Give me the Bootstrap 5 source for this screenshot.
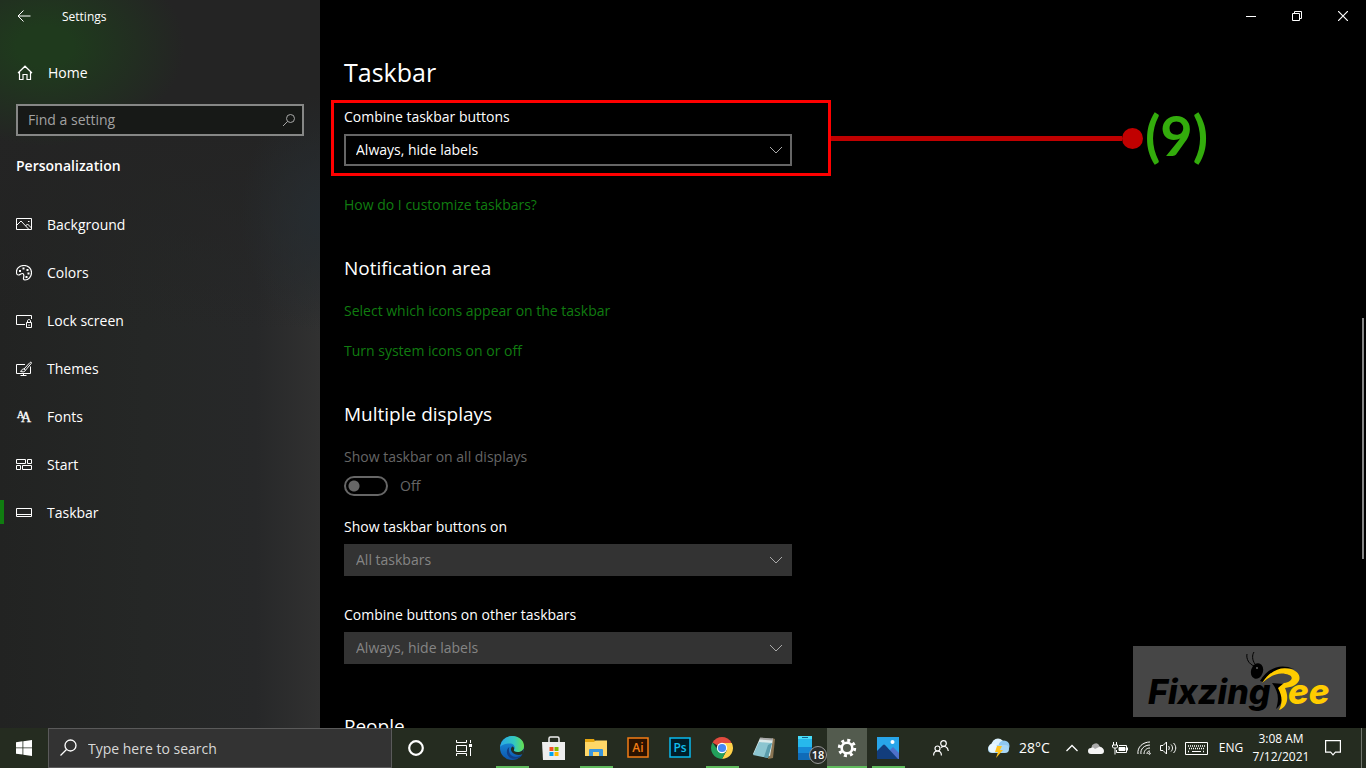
<!DOCTYPE html>
<html lang="en" data-bs-theme="dark">
<head>
<meta charset="utf-8">
<meta name="viewport" content="width=device-width, initial-scale=1">
<title>Settings - Taskbar</title>
<link href="https://cdn.jsdelivr.net/npm/bootstrap@5.3.0/dist/css/bootstrap.min.css" rel="stylesheet">
<style>
body { font-family: "Open Sans", "Noto Sans", sans-serif; font-size: 14px; line-height: 20px; color: #fff; background: #000; }
svg { display: block; flex: none; }
.ln { fill: none; stroke: currentColor; }
.btn { --bs-btn-padding-x: 0; --bs-btn-padding-y: 0; --bs-btn-border-radius: 0; --bs-btn-border-width: 0; --bs-btn-color: #fff; line-height: 20px; display: flex; align-items: center; justify-content: center; }

.side { width: 320px; background:
  radial-gradient(ellipse 140px 100px at 45px 46px, #1f3a1d 20%, transparent),
  radial-gradient(ellipse 80px 120px at 320px 215px, #262c30, transparent),
  linear-gradient(180deg, #242424 130px, transparent 330px),
  linear-gradient(90deg, #222322 0%, #252726 45%, #272829 80%, #313131 100%); }
.caption-bar { height: 32px; font-size: 12px; }
.caption-bar .btn { width: 46px; }
.side .btn-back { width: 48px; }
.app-name { margin: 2px 0 0 14px; }
.home-link { height: 48px; margin: 17px 0 7px; padding-left: 17px; gap: 15px; color: #fff; text-decoration: none; }
.find-box { margin: 0 16px; }
.find-box .form-control { height: 32px; border: 2px solid #868786; border-radius: 0; background: #171917; padding: 0 36px 2px 10px; font-size: 14px; color: #fff; }
.find-box .form-control::placeholder { color: #a2a2a2; opacity: 1; }
.find-box svg { position: absolute; right: 8px; top: 9px; color: #a8a8a8; }
.side h2 { font-size: 14px; line-height: 20px; font-weight: 600; margin: 20px 16px 25px; }
.side .nav-link { height: 48px; padding: 0 16px; gap: 15px; color: #fff; display: flex; align-items: center; position: relative; }
.side .nav-link.active::before { content: ""; position: absolute; left: 0; top: 11px; width: 4px; height: 24px; background: #107c10; }

.pane { min-width: 0; }
.page-body { padding: 20px 24px 0; }
h1 { font-size: 25px; line-height: 40px; font-weight: 400; margin: 0 0 8px; }
.page-body h2 { font-size: 19px; line-height: 28px; font-weight: 400; margin: 39px 0 19px; }
.page-body a { display: table; color: #107c10; text-decoration: none; margin-bottom: 20px; }
.callout { margin: 0 0 19px -13px; }
.callout-frame { width: 500px; border: 3px solid #f00; padding: 4px 10px 7px; }
.callout-line { flex: 0 1 291px; height: 5px; background: #c00000; }
.callout-dot { width: 21px; height: 21px; background: #c00000; }
.callout-num { font: 700 56px/60px Lato, sans-serif; color: #33ac0c; margin-left: 2px; padding-bottom: 6px; }
.pick label { display: block; margin-bottom: 7px; }
.pick + .pick { margin-top: 29px; }
.pick .form-select { width: 448px; max-width: 100%; height: 32px; padding: 0 36px 0 10px; border: 2px solid #666; border-radius: 0; font-size: 14px; line-height: 20px; color: #fff;
  background: #000 url("data:image/svg+xml,%3Csvg xmlns='http://www.w3.org/2000/svg' width='14' height='8'%3E%3Cpath d='M1 1l6 6 6-6' fill='none' stroke='%23aaa'/%3E%3C/svg%3E") no-repeat right 7px center / 14px 8px; }
.pick .form-select:disabled { background-color: #333; border-color: #333; color: #858585; }
.muted-text { color: #666; }
.switch-row { height: 20px; margin: 9px 0 21px; gap: 12px; }
.toggle.form-check-input { width: 44px; height: 20px; margin: 0; border: 2px solid #666; border-radius: 10px; opacity: 1;
  background: radial-gradient(circle at 8px 8px, #666 5px, transparent 6px) no-repeat; }
.scroll-thumb { position: absolute; right: 2px; top: 43.7%; width: 2px; height: 33.1%; background: #858585; }
.brand { position: absolute; right: 20px; bottom: 11px; background: #464646; }

.tasks { height: 40px; background: #252c20; }
.tasks .btn { height: 40px; width: 42px; position: relative; }
.tasks .btn-wide { width: 48px; }
.pinned { margin-left: 3px; }
.tasks .running::after { content: ""; position: absolute; left: 5px; right: 4px; bottom: 0; height: 2px; background: #60bb5d; }
.tasks .current { background: #535b4e; width: 40px; }
.tasks .current::after { left: 0; right: 0; }
.find-all { width: 344px; }
.find-all .form-control { height: 40px; border: 1px solid #5a5a5a; border-radius: 0; background: #333; padding: 0 10px 0 39px; font-size: 14px; }
.find-all .form-control::placeholder { color: #d8d8d8; opacity: 1; }
.find-all svg { position: absolute; left: 12px; top: 11px; }
.count-pill { position: absolute; right: 0; bottom: 4px; width: 18px; height: 18px; border: 1px solid #999; background: #2b2d2b; font-size: 11px; line-height: 16px; font-weight: 600; }
.tray .btn { font-size: 12px; width: 24px; }
.tray .btn-weather { width: 99px; font-size: 14px; gap: 8px; margin-left: 8px; }
.tray .btn-lang { width: 38px; }
.tray .btn-clock { width: 62px; line-height: 18px; }
.tray .btn-notes { width: 42px; }
.peek { width: 5px; height: 40px; margin-left: 7px; border-left: 1px solid #71766d; }
</style>
</head>
<body class="vh-100 d-flex flex-column overflow-hidden">

<main class="d-flex flex-grow-1 position-relative overflow-hidden">
  <aside class="side flex-shrink-0">
    <div class="caption-bar d-flex align-items-center">
      <button class="btn btn-back" aria-label="Back"><svg width="14" height="12" viewBox="0 0 14 12" class="ln"><path d="M6.500.5L1 6l5.500 5.500M1 6h12.500"/></svg></button>
      <span class="app-name">Settings</span>
    </div>
    <a href="#" class="home-link d-flex align-items-center"><svg width="16" height="16" viewBox="0 0 16 16" class="ln" stroke-width="1.200"><path d="M1 8L8 1.200 15 8M2.500 7v7.500H6v-5h4v5h3.500V7"/></svg>Home</a>
    <div class="find-box position-relative">
      <input class="form-control" type="search" placeholder="Find a setting" aria-label="Find a setting">
      <svg width="14" height="14" viewBox="0 0 14 14" class="ln"><circle cx="8.500" cy="5.500" r="4"/><path d="M5.600 8.400L1 13"/></svg>
    </div>
    <h2>Personalization</h2>
    <nav class="nav flex-column">
      <a class="nav-link" href="#"><svg width="16" height="16" viewBox="0 0 16 16" class="ln"><path d="M.5 1.500h15v11H.5zM1 8l4-4 7.500 8M9.500 9l2-2 4 4"/><path d="M12 4.500h1.500"/></svg>Background</a>
      <a class="nav-link" href="#"><svg width="16" height="16" viewBox="0 0 16 16" class="ln"><path stroke-width="1.200" d="M.6 8.500C-.3 3.500 3.500.5 8 .5c4.300 0 7.500 3 7.500 7 0 4.400-3 7.500-6.500 7.500-1.600 0-1.700-1-1.400-2.300.4-1.600.5-4-1.100-4.200C5 8.300 4 10 2.400 10 1.300 10 .8 9.500.6 8.500z"/><path stroke-width="2" d="M3 6h2M6.500 3.500h2M10.500 5h2M11.500 8.500h2M9.500 12h2"/></svg>Colors</a>
      <a class="nav-link" href="#"><svg width="16" height="16" viewBox="0 0 16 16" class="ln"><path d="M9 11.500H.5v-9h15V6M10.500 9.500h5v5h-5zM11.500 9.500V8c0-2 3-2 3 0v1.500M13 11.500v1.500"/></svg>Lock screen</a>
      <a class="nav-link" href="#"><svg width="16" height="16" viewBox="0 0 16 16" class="ln"><path d="M9 3.500H.5v9h14v-7M7.500 12.500v2M4.500 14.500h6M8 8l6-6.500c1-.8 2 0 1.200 1L9.500 9.200zM8 8c-1.500-.2-2 .5-2.300 1.500-.2.600-.7.800-1.200.8 1.800 1 4.600.7 5-1.100"/></svg>Themes</a>
      <a class="nav-link" href="#"><svg width="16" height="16" viewBox="0 0 16 16" fill="currentColor" stroke="currentColor" stroke-width=".3" font-family="Liberation Serif, serif"><text x="1" y="9" font-size="10">A</text><text x="5" y="13" font-size="14">A</text></svg>Fonts</a>
      <a class="nav-link" href="#"><svg width="16" height="16" viewBox="0 0 16 16" class="ln"><path d="M.5 2.500h9v4h-9zM11.500 2.500h4v4h-4zM.5 8.500h4v4h-4zM6.500 8.500h9v4h-9z"/></svg>Start</a>
      <a class="nav-link active" href="#" aria-current="page"><svg width="16" height="16" viewBox="0 0 16 16" class="ln"><path d="M.5 3.500h15v8H.5zM1 9.500h14"/></svg>Taskbar</a>
    </nav>
  </aside>

  <section class="pane flex-grow-1">
    <div class="caption-bar d-flex justify-content-end">
      <button class="btn" aria-label="Minimize"><svg width="10" height="10" class="ln"><path d="M0 5.500h10"/></svg></button>
      <button class="btn" aria-label="Restore"><svg width="10" height="10" class="ln"><path d="M.5 2.500h7v7h-7zM2.500 2.500v-2h7v7h-2"/></svg></button>
      <button class="btn" aria-label="Close"><svg width="10" height="10" class="ln" stroke-width="1.200"><path d="M0 0l10 10M10 0L0 10"/></svg></button>
    </div>
    <div class="page-body">
      <h1>Taskbar</h1>
      <div class="callout d-flex align-items-center">
        <div class="callout-frame pick">
          <label for="combine">Combine taskbar buttons</label>
          <select id="combine" class="form-select"><option>Always, hide labels</option></select>
        </div>
        <div class="callout-line"></div>
        <div class="callout-dot rounded-circle"></div>
        <div class="callout-num">(9)</div>
      </div>
      <a href="#">How do I customize taskbars?</a>

      <h2>Notification area</h2>
      <a href="#">Select which icons appear on the taskbar</a>
      <a href="#">Turn system icons on or off</a>

      <h2>Multiple displays</h2>
      <label class="d-block muted-text" for="all-displays">Show taskbar on all displays</label>
      <div class="switch-row form-switch d-flex align-items-center muted-text ps-0">
        <input id="all-displays" class="toggle form-check-input" type="checkbox" role="switch" disabled>
        <span>Off</span>
      </div>
      <div class="pick">
        <label for="buttons-on">Show taskbar buttons on</label>
        <select id="buttons-on" class="form-select" disabled><option>All taskbars</option></select>
      </div>
      <div class="pick">
        <label for="combine-other">Combine buttons on other taskbars</label>
        <select id="combine-other" class="form-select" disabled><option>Always, hide labels</option></select>
      </div>
      <h2 class="mt-5">People</h2>
    </div>
  </section>

  <div class="scroll-thumb"></div>
  <div class="brand">
    <svg width="213" height="71" viewBox="0 0 213 71" role="img" aria-label="FixzingBee" font-family="Inter, sans-serif" font-size="33" font-weight="800" font-style="italic">
      <text x="15" y="58" font-size="34">Fixzing</text>
      <text x="155" y="58" font-size="35" fill="#fc0">ee</text>
      <path d="M127 35c8-13 20-18 34-12-13-2-23 2-31 13zM139 37l12 1 1 5-4 0c4 8 1 15-5 20 3-9 3-17-4-26z"/>
      <path fill="#fc0" d="M129 37c8-12 18-17 29-14 12 4 11 15-1 18l-5 1c4 9 3 19-6 22 4-8 3-14-1-22l6-5c8-1 10-6 5-8-9-4-18 0-27 8z"/>
      <ellipse cx="124" cy="25" rx="6" ry="8" transform="rotate(18 124 25)"/>
      <path d="M121 20c-5-2-8-7-7-12M122 18c-3-4-3-9-1-12" fill="none" stroke="#000"/>
      <circle cx="124" cy="22" r="1" fill="#666"/>
    </svg>
  </div>
</main>

<footer class="tasks d-flex align-items-center flex-shrink-0">
  <button class="btn btn-wide" aria-label="Start"><svg width="16" height="16" viewBox="0 0 16 16" fill="#fff"><path d="M0 2.200L6.500 1.300v6.200H0zM7.300 1.200L16 0v7.500H7.300zM0 8.300h6.500v6.300L0 13.700zM7.300 8.300H16V16l-8.700-1.200z"/></svg></button>
  <div class="find-all position-relative">
    <input class="form-control" type="search" placeholder="Type here to search" aria-label="Type here to search">
    <svg width="17" height="17" viewBox="0 0 17 17" class="ln" stroke-width="1.300"><circle cx="10.500" cy="6.500" r="5.500"/><path d="M6.500 10.500L.5 16.500"/></svg>
  </div>
  <button class="btn btn-wide" aria-label="Cortana"><svg width="16" height="16" class="ln" stroke-width="2.200"><circle cx="8" cy="8" r="6.800"/></svg></button>
  <button class="btn btn-wide" aria-label="Task view"><svg width="17" height="16" viewBox="0 0 17 16" class="ln"><path d="M.5 0v2.500h10V0M.5 5.500h10v6H.5zM.5 16v-2.500h10V16M14.500 0v3M14.500 8v8"/><path d="M13 4h3v3h-3z" fill="currentColor" stroke="none"/></svg></button>
  <div class="pinned d-flex">
    <button class="btn running" aria-label="Edge"><svg width="24" height="24" viewBox="0 0 24 24"><defs><linearGradient id="e1" x2="1"><stop stop-color="#29a8e8"/><stop offset=".6" stop-color="#34c9bd"/><stop offset="1" stop-color="#67e04c"/></linearGradient><linearGradient id="e2" y2="1" x2="0"><stop stop-color="#1b97e0"/><stop offset="1" stop-color="#0d55ad"/></linearGradient></defs><circle cx="12" cy="12" r="12" fill="url(#e2)"/><path d="M.2 11C1 4 6 0 12 0c7 0 12 4.500 12 10 0 4-3 6-6.500 6-3 0-4.300-1-3.500-2.200 1.500-2 .8-6.300-4.500-6.300C5.500 7.500 1.500 9 .2 11z" fill="url(#e1)"/><path d="M9.300 11c-2 7 3.500 11.500 9.500 9.500 1.500-.5 3-1.300 3.800-2.300-3 6-14 6.500-15.600-1C6.500 14.500 7.300 12.500 9.300 11z" fill="#113f87"/><path d="M14 13.800c-.8 1.200.5 2.200 3.500 2.200 2.500 0 4.500-.8 5.500-2.300l1-1-1.200 5.200c-5 2.500-10.800.1-11.800-3.900-.3-1.500.5-2.900 1.500-3.500 1.300.5 2 2 1.500 3.300z" fill="#252c20"/></svg></button>
    <button class="btn" aria-label="Store"><svg width="24" height="24" viewBox="0 0 24 24"><path d="M7 7V2.500Q7 1 8.500 1h7Q17 1 17 2.500V7" fill="none" stroke="#eee" stroke-width="1.500"/><path fill="#eee" d="M0 6h23v18H1z"/><path fill="#f25022" d="M7.500 11h4v4h-4z"/><path fill="#7fba00" d="M12.500 11h4v4h-4z"/><path fill="#00a4ef" d="M7.500 16h4v4h-4z"/><path fill="#ffb900" d="M12.500 16h4v4h-4z"/></svg></button>
    <button class="btn running" aria-label="File Explorer"><svg width="22" height="20" viewBox="0 0 22 20"><path fill="#e5a50f" d="M0 1h9l1 2h12v15H0z"/><path fill="#ffd767" d="M0 4h9l1.500-1.500H22V18H0z"/><path fill="#3a96dd" d="M4 18v-6q0-1 1-1h12q1 0 1 1v6h-4v-4H8v4z"/></svg></button>
    <button class="btn" aria-label="Illustrator"><svg width="22" height="23" font-family="Open Sans, sans-serif" font-size="12" font-weight="600" text-anchor="middle"><path d="M1 1h20v19H1z" fill="#2b1200" stroke="#f37c14" stroke-width="1.500"/><text x="11" y="15" fill="#f37c14">Ai</text></svg></button>
    <button class="btn" aria-label="Photoshop"><svg width="22" height="23" font-family="Open Sans, sans-serif" font-size="12" font-weight="600" text-anchor="middle"><path d="M1 1h20v19H1z" fill="#001d29" stroke="#09b9ee" stroke-width="1.500"/><text x="11" y="15" fill="#12bfee">Ps</text></svg></button>
    <button class="btn running" aria-label="Chrome"><svg width="22" height="22" viewBox="0 0 22 22"><path fill="#e24b3f" d="M11 11L1.500 5.500a11 11 0 0 1 19 0z"/><path fill="#ffd24a" d="M11 6h9.800A11 11 0 0 1 11 22l5-9z"/><path fill="#22a05b" d="M1.500 5.500A11 11 0 0 0 11 22l4.500-8.500-4.500-2.500-4.500 1.500z"/><circle cx="11" cy="11" r="5.200" fill="#fff"/><circle cx="11" cy="11" r="4.100" fill="#4688f4"/></svg></button>
    <button class="btn" aria-label="Notepad"><svg width="24" height="22" viewBox="0 0 24 22"><path fill="#8a7553" d="M20 1l3 1-2 19-5 1z"/><path fill="#dce9e9" d="M8 1l13 1-3 17-17-2z"/><path fill="#8cc5d0" d="M7 5l13 1-4 15-15-3z"/><path fill="#5a9cac" d="M16 8l4-2-4 15-4-1z"/><path d="M8 1.500l13 1" stroke="#aaa" stroke-width="2"/></svg></button>
    <button class="btn" aria-label="Your Phone, 18 notifications"><svg width="16" height="24" viewBox="0 0 16 24"><path fill="#1689d6" d="M0 0h14v24H0z"/><path fill="#27b8ec" d="M0 0h14v11H0z"/><path fill="#48def9" d="M0 0h14v3H0z"/><path fill="#0f6bb8" d="M0 17h14v7H0z"/><path stroke="#13628e" d="M4 1.500h6"/></svg><span class="count-pill rounded-circle">18</span></button>
    <button class="btn running current" aria-label="Settings"><svg width="20" height="20" viewBox="-10 -10 20 20" fill="none" stroke="#fff"><circle r="5.300" stroke-width="2.600"/><circle r="7.700" stroke-width="3" stroke-dasharray="3 3.047"/></svg></button>
    <button class="btn running" aria-label="Photos"><svg width="22" height="22" viewBox="0 0 22 22"><path fill="#28a5e9" d="M0 0h22v22H0z"/><path fill="#4f70ca" d="M11 15l5-5 6 6v6H11z"/><path fill="#123d7c" d="M0 14l6-6q1-1 2 0l13 14H0z"/><circle cx="15.500" cy="5" r="2" fill="#fff"/></svg></button>
  </div>
  <div class="tray ms-auto d-flex align-items-center">
    <button class="btn" aria-label="People"><svg width="16" height="16" viewBox="0 0 16 16" class="ln" stroke-width="1.200"><circle cx="4.500" cy="8.500" r="2.500"/><circle cx="10.500" cy="3.500" r="2.800"/><path d="M.6 15.500c0-3 1.400-4.500 3.900-4.500s3.900 1.500 3.900 4.500M8 7.500c3-2.300 7-1 7.300 3.500"/></svg></button>
    <button class="btn btn-weather ps-3"><svg width="24" height="20" viewBox="0 0 24 20"><circle cx="11" cy="7" r="6.500" fill="#dcf2ff"/><circle cx="17" cy="8" r="5.500" fill="#8fc7ef"/><rect y="7" x="1" width="21" height="8" rx="4" fill="#a7d6f5"/><circle cx="6" cy="10" r="4.500" fill="#e8f7ff"/><path fill="#ffc21a" d="M10 8h5l-2 4h3l-7 8 2-6H8z"/></svg>28°C</button>
    <button class="btn" aria-label="Show hidden icons"><svg width="12" height="8" class="ln" stroke-width="1.300"><path d="M.5 7L6 1.500 11.500 7"/></svg></button>
    <button class="btn" aria-label="OneDrive"><svg width="16" height="11" viewBox="0 0 16 11"><path fill="#aaa" d="M4 6a4 4 0 0 1 7.500-3L14 5l-4 3z"/><path fill="#f5f5f5" d="M3 11a3 3 0 0 1 0-6c2-1 3 0 4 1l4-2c3-.3 5 2 5 4s-1 3-3 3z"/></svg></button>
    <button class="btn" aria-label="Battery"><svg width="16" height="13" viewBox="0 0 16 13" class="ln"><path d="M7 3.500h7.500v7H4.500V8M.5 3h5v2l-1 1h-3l-1-1zM1.500 0v3M4.500 0v3M3 6v6.500M15.500 5.500v3"/><path fill="currentColor" d="M7 5.500h6v3H7z"/></svg></button>
    <button class="btn" aria-label="Wi-Fi"><svg width="14" height="14" viewBox="0 0 14 14" class="ln"><path d="M1 13C0 6 6 1 13 1M4 13c-1-5 3.500-9 9-9M7 13c0-3.500 2.500-6 6-6M10 13c0-2 1-3 3-3"/><circle cx="12.500" cy="12.500" r=".8"/></svg></button>
    <button class="btn" aria-label="Volume"><svg width="17" height="14" viewBox="0 0 17 14" class="ln"><path d="M.5 4.500H3L6.500 1v12L3 9.500H.5zM8.500 5c1 1 1 3 0 4M11 3.500c2 2 2 5 0 7M13.500 2c3 3 3 7 0 10"/></svg></button>
    <button class="btn ms-1 me-1" aria-label="Touch keyboard"><svg width="23" height="13" viewBox="0 0 23 13" class="ln"><path d="M.5.5h22v12H.5z"/><path stroke-dasharray="1 1" stroke-width="1.500" d="M3 4h17M4 6.500h16M3 9.500h2M18 9.500h2"/><path d="M7 9.500h9"/></svg></button>
    <button class="btn btn-lang">ENG</button>
    <button class="btn btn-clock"><span>3:08 AM<br>7/12/2021</span></button>
    <button class="btn btn-notes" aria-label="Notifications"><svg width="16" height="16" viewBox="0 0 16 16" class="ln" stroke-width="1.200"><path d="M.6.6h14.800v11.500h-5L8 14.800l-2.400-2.700h-5z"/></svg></button>
    <div class="peek"></div>
  </div>
</footer>

<script src="https://cdn.jsdelivr.net/npm/bootstrap@5.3.0/dist/js/bootstrap.bundle.min.js"></script>
</body>
</html>
